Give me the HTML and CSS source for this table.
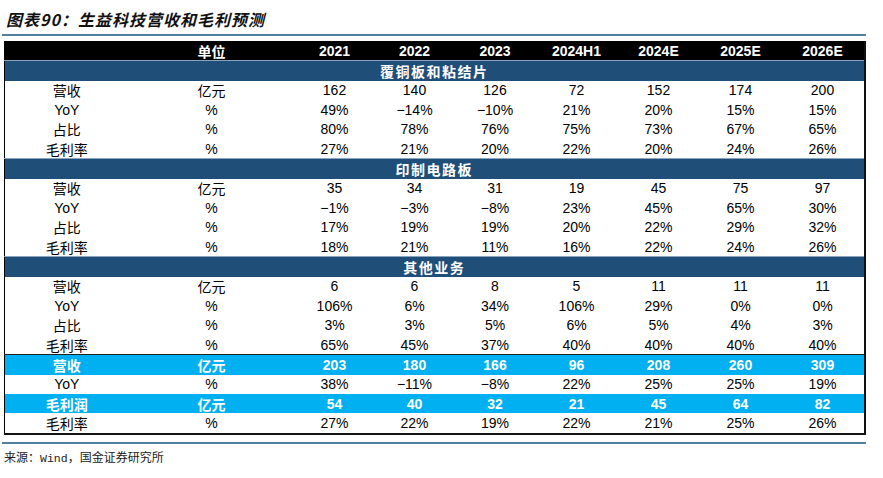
FILE: index.html
```html
<!DOCTYPE html>
<html lang="zh-CN">
<head>
<meta charset="utf-8">
<link rel="stylesheet" href="styles.css">
</head>
<body>
<div class="page">
  <h1 class="title">图表90：生益科技营收和毛利预测</h1>
  <div class="rule"></div>
  <table class="data">
    <colgroup>
      <col class="c-label"><col class="c-unit">
      <col class="c80"><col class="c80"><col class="c81"><col class="c82"><col class="c82"><col class="c82"><col class="c83">
    </colgroup>
    <thead>
      <tr class="head"><th></th><th class="cn">单位</th><th>2021</th><th>2022</th><th>2023</th><th>2024H1</th><th>2024E</th><th>2025E</th><th>2026E</th></tr>
    </thead>
    <tbody>
      <tr class="sec"><td colspan="9">覆铜板和粘结片</td></tr>
      <tr><td class="cn">营收</td><td class="cn">亿元</td><td>162</td><td>140</td><td>126</td><td>72</td><td>152</td><td>174</td><td>200</td></tr>
      <tr><td class="lat">YoY</td><td>%</td><td>49%</td><td>−14%</td><td>−10%</td><td>21%</td><td>20%</td><td>15%</td><td>15%</td></tr>
      <tr><td class="cn">占比</td><td>%</td><td>80%</td><td>78%</td><td>76%</td><td>75%</td><td>73%</td><td>67%</td><td>65%</td></tr>
      <tr><td class="cn">毛利率</td><td>%</td><td>27%</td><td>21%</td><td>20%</td><td>22%</td><td>20%</td><td>24%</td><td>26%</td></tr>
      <tr class="sec"><td colspan="9">印制电路板</td></tr>
      <tr><td class="cn">营收</td><td class="cn">亿元</td><td>35</td><td>34</td><td>31</td><td>19</td><td>45</td><td>75</td><td>97</td></tr>
      <tr><td class="lat">YoY</td><td>%</td><td>−1%</td><td>−3%</td><td>−8%</td><td>23%</td><td>45%</td><td>65%</td><td>30%</td></tr>
      <tr><td class="cn">占比</td><td>%</td><td>17%</td><td>19%</td><td>19%</td><td>20%</td><td>22%</td><td>29%</td><td>32%</td></tr>
      <tr><td class="cn">毛利率</td><td>%</td><td>18%</td><td>21%</td><td>11%</td><td>16%</td><td>22%</td><td>24%</td><td>26%</td></tr>
      <tr class="sec"><td colspan="9">其他业务</td></tr>
      <tr><td class="cn">营收</td><td class="cn">亿元</td><td>6</td><td>6</td><td>8</td><td>5</td><td>11</td><td>11</td><td>11</td></tr>
      <tr><td class="lat">YoY</td><td>%</td><td>106%</td><td>6%</td><td>34%</td><td>106%</td><td>29%</td><td>0%</td><td>0%</td></tr>
      <tr><td class="cn">占比</td><td>%</td><td>3%</td><td>3%</td><td>5%</td><td>6%</td><td>5%</td><td>4%</td><td>3%</td></tr>
      <tr><td class="cn">毛利率</td><td>%</td><td>65%</td><td>45%</td><td>37%</td><td>40%</td><td>40%</td><td>40%</td><td>40%</td></tr>
      <tr class="hl first"><td class="cn">营收</td><td class="cn">亿元</td><td>203</td><td>180</td><td>166</td><td>96</td><td>208</td><td>260</td><td>309</td></tr>
      <tr><td class="lat">YoY</td><td>%</td><td>38%</td><td>−11%</td><td>−8%</td><td>22%</td><td>25%</td><td>25%</td><td>19%</td></tr>
      <tr class="hl"><td class="cn">毛利润</td><td class="cn">亿元</td><td>54</td><td>40</td><td>32</td><td>21</td><td>45</td><td>64</td><td>82</td></tr>
      <tr class="last"><td class="cn">毛利率</td><td>%</td><td>27%</td><td>22%</td><td>19%</td><td>22%</td><td>21%</td><td>25%</td><td>26%</td></tr>
    </tbody>
  </table>
  <div class="rule rule-bottom"></div>
  <p class="source">来源：<span class="mono">Wind</span>，国金证券研究所</p>
</div>
</body>
</html>
```

FILE: styles.css
```css
html, body {
  margin: 0;
  padding: 0;
  background: #ffffff;
}

.page {
  width: 883px;
  height: 478px;
  font-family: "Liberation Sans", "Noto Sans CJK SC", sans-serif;
  color: #000;
}

.title {
  margin: 0;
  height: 34px;
  padding-left: 6px;
  font-family: "Noto Sans CJK SC", sans-serif;
  font-size: 16px;
  font-weight: 700;
  font-style: italic;
  line-height: 38px;
  color: #111;
  letter-spacing: 1px;
}

.rule {
  margin-left: 2px;
  width: 864px;
  height: 2px;
  background: #4f7f9f;
}

.data {
  margin: 5px 0 0 4px;
  width: 860px;
  border-collapse: collapse;
  table-layout: fixed;
  border-left: 1px solid #000;
  border-right: 2px solid #111;
  border-bottom: 2px solid #111;
}

.c-label { width: 124px; }
.c-unit { width: 166px; }
.c80 { width: 80px; }
.c81 { width: 81px; }
.c82 { width: 82px; }
.c83 { width: 83px; }

.data th,
.data td {
  height: 19.4px;
  padding: 0;
  text-align: center;
  vertical-align: middle;
  font-size: 14px;
  line-height: 16px;
  white-space: nowrap;
}

.head th {
  background: #000;
  color: #fff;
  font-weight: 700;
  font-size: 14px;
}

.cn {
  font-family: "Noto Sans CJK SC", sans-serif;
  font-size: 14px;
}

.lat {
  font-family: "Liberation Sans", sans-serif;
}

.sec td {
  background: #1f4e78;
  color: #fff;
  font-family: "Noto Sans CJK SC", sans-serif;
  font-weight: 700;
  letter-spacing: 1.5px;
  border-top: 1px solid #8aa4bd;
}

.hl td {
  background: #00b0f0;
  color: #fff;
  font-weight: 700;
}

.hl.first td {
  border-top: 1px solid #222;
}

.rule-bottom {
  margin-top: 7px;
}

.source {
  margin: 5px 0 0 4px;
  font-family: "Noto Sans CJK SC", sans-serif;
  font-size: 12px;
  line-height: 16px;
  color: #222;
}

.mono {
  font-family: "Liberation Mono", monospace;
  font-size: 11.5px;
}
```
